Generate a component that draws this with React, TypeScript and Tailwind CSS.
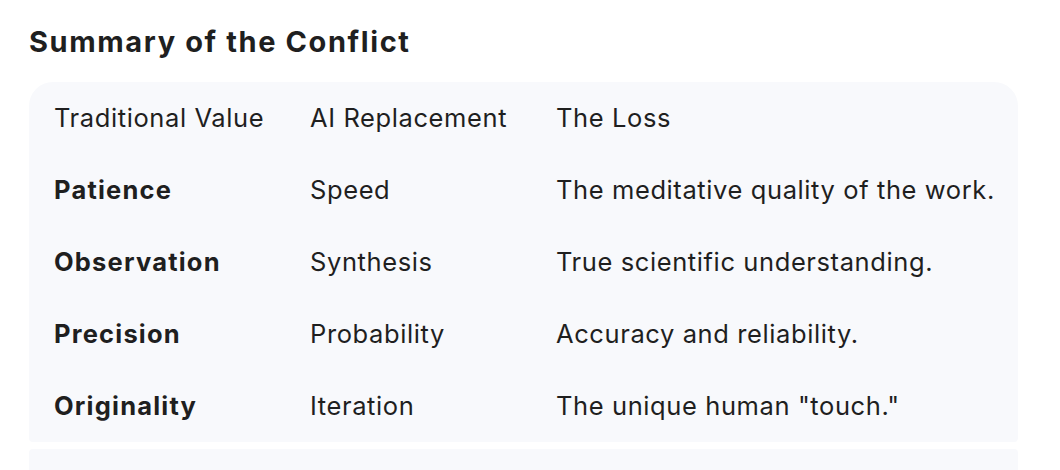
const rows = [
  { value: "Patience", ai: "Speed", loss: "The meditative quality of the work." },
  { value: "Observation", ai: "Synthesis", loss: "True scientific understanding." },
  { value: "Precision", ai: "Probability", loss: "Accuracy and reliability." },
  { value: "Originality", ai: "Iteration", loss: 'The unique human "touch."' },
];

export default function App() {
  return (
    <div className="bg-white h-[470px] overflow-hidden pl-[29px] pr-[42px] pt-[22px] text-[#1f1f1f] font-['Inter',sans-serif]">
      <h2 className="text-[29px] font-bold leading-[40px] tracking-[1.6px]">Summary of the Conflict</h2>
      <div className="mt-[20px] bg-[#f8f9fc] rounded-t-[24px] rounded-b-[4px]">
        <div className="grid grid-cols-[256px_247px_1fr] text-[25.5px] tracking-[0.6px] h-[72px] items-center">
          <div className="pl-[25px]">Traditional Value</div>
          <div className="pl-[25px]">AI Replacement</div>
          <div className="pl-[24px]">The Loss</div>
        </div>
        {rows.map((r) => (
          <div key={r.value} className="grid grid-cols-[256px_247px_1fr] text-[25.5px] tracking-[0.6px] h-[72px] items-center">
            <div className="pl-[25px] font-bold tracking-[1.2px]">{r.value}</div>
            <div className="pl-[25px]">{r.ai}</div>
            <div className="pl-[24px]">{r.loss}</div>
          </div>
        ))}
      </div>
      <div className="mt-[7px] h-[40px] bg-[#f8f9fc] rounded-t-[4px]"></div>
    </div>
  );
}
